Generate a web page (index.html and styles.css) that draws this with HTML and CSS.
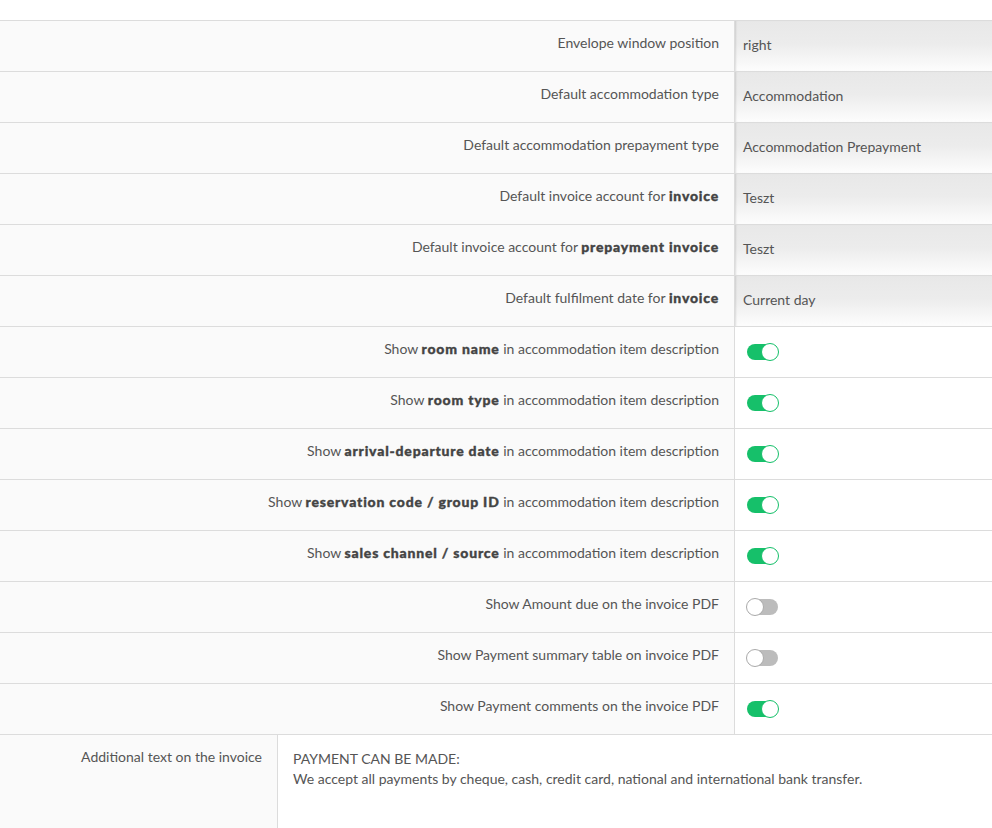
FILE: index.html
```html
<!DOCTYPE html>
<html>
<head>
<meta charset="utf-8">
<link rel="stylesheet" href="styles.css">
</head>
<body>
<div class="settings">
  <div class="row"><div class="label">Envelope window position</div><div class="value select">right</div></div>
  <div class="row"><div class="label">Default accommodation type</div><div class="value select">Accommodation</div></div>
  <div class="row"><div class="label">Default accommodation prepayment type</div><div class="value select">Accommodation Prepayment</div></div>
  <div class="row"><div class="label">Default invoice account for <b>invoice</b></div><div class="value select">Teszt</div></div>
  <div class="row"><div class="label">Default invoice account for <b>prepayment invoice</b></div><div class="value select">Teszt</div></div>
  <div class="row"><div class="label">Default fulfilment date for <b>invoice</b></div><div class="value select">Current day</div></div>
  <div class="row"><div class="label">Show <b>room name</b> in accommodation item description</div><div class="value"><span class="toggle on"></span></div></div>
  <div class="row"><div class="label">Show <b>room type</b> in accommodation item description</div><div class="value"><span class="toggle on"></span></div></div>
  <div class="row"><div class="label">Show <b>arrival-departure date</b> in accommodation item description</div><div class="value"><span class="toggle on"></span></div></div>
  <div class="row"><div class="label">Show <b>reservation code / group ID</b> in accommodation item description</div><div class="value"><span class="toggle on"></span></div></div>
  <div class="row"><div class="label">Show <b>sales channel / source</b> in accommodation item description</div><div class="value"><span class="toggle on"></span></div></div>
  <div class="row"><div class="label">Show Amount due on the invoice PDF</div><div class="value"><span class="toggle"></span></div></div>
  <div class="row"><div class="label">Show Payment summary table on invoice PDF</div><div class="value"><span class="toggle"></span></div></div>
  <div class="row"><div class="label">Show Payment comments on the invoice PDF</div><div class="value"><span class="toggle on"></span></div></div>
  <div class="row text-row">
    <div class="label">Additional text on the invoice</div>
    <div class="textarea">PAYMENT CAN BE MADE:<br>We accept all payments by cheque, cash, credit card, national and international bank transfer.</div>
  </div>
</div>
</body>
</html>
```
FILE: styles.css
```css
html, body {
  margin: 0;
  padding: 0;
  background: #fff;
}
body {
  font-family: Lato, "Open Sans", sans-serif;
  font-size: 14px;
  color: #555;
  padding-top: 20px;
}
.settings {
  display: flex;
  flex-direction: column;
}
.row {
  display: flex;
  height: 50px;
  border-top: 1px solid #dcdcdc;
}
.label {
  width: 719px;
  padding-right: 15px;
  background: #fafafa;
  border-right: 1px solid #dcdcdc;
  text-align: right;
  padding-top: 12px;
  box-sizing: content-box;
  line-height: 20px;
  white-space: nowrap;
}
.label b {
  font-weight: 900;
  color: #444;
  letter-spacing: 0.8px;
  -webkit-text-stroke: 0.35px #444;
}
.value {
  flex: 1;
  display: flex;
  align-items: center;
  padding-left: 12px;
  padding-bottom: 1px;
}
.value.select {
  padding-left: 8px;
  padding-bottom: 4px;
  background: linear-gradient(to bottom, #e8e8e8 0%, #ececec 45%, #fdfdfd 100%);
  box-shadow: inset 2px 0 2px -1px rgba(0,0,0,0.12);
}
.toggle {
  position: relative;
  display: block;
  width: 31px;
  height: 16px;
  border-radius: 8px;
  background: #bcbcbc;
}
.toggle::after {
  content: "";
  position: absolute;
  top: -1px;
  left: -1px;
  width: 16px;
  height: 16px;
  border-radius: 50%;
  background: #fff;
  border: 1px solid #aaa;
}
.toggle.on {
  background: #16c06a;
}
.toggle.on::after {
  left: auto;
  right: -1px;
  border-color: #16c06a;
}
.text-row {
  height: 93px;
}
.text-row .label {
  width: 262px;
  padding-top: 12px;
}
.textarea {
  flex: 1;
  padding: 14px 15px;
  line-height: 20px;
}
```
